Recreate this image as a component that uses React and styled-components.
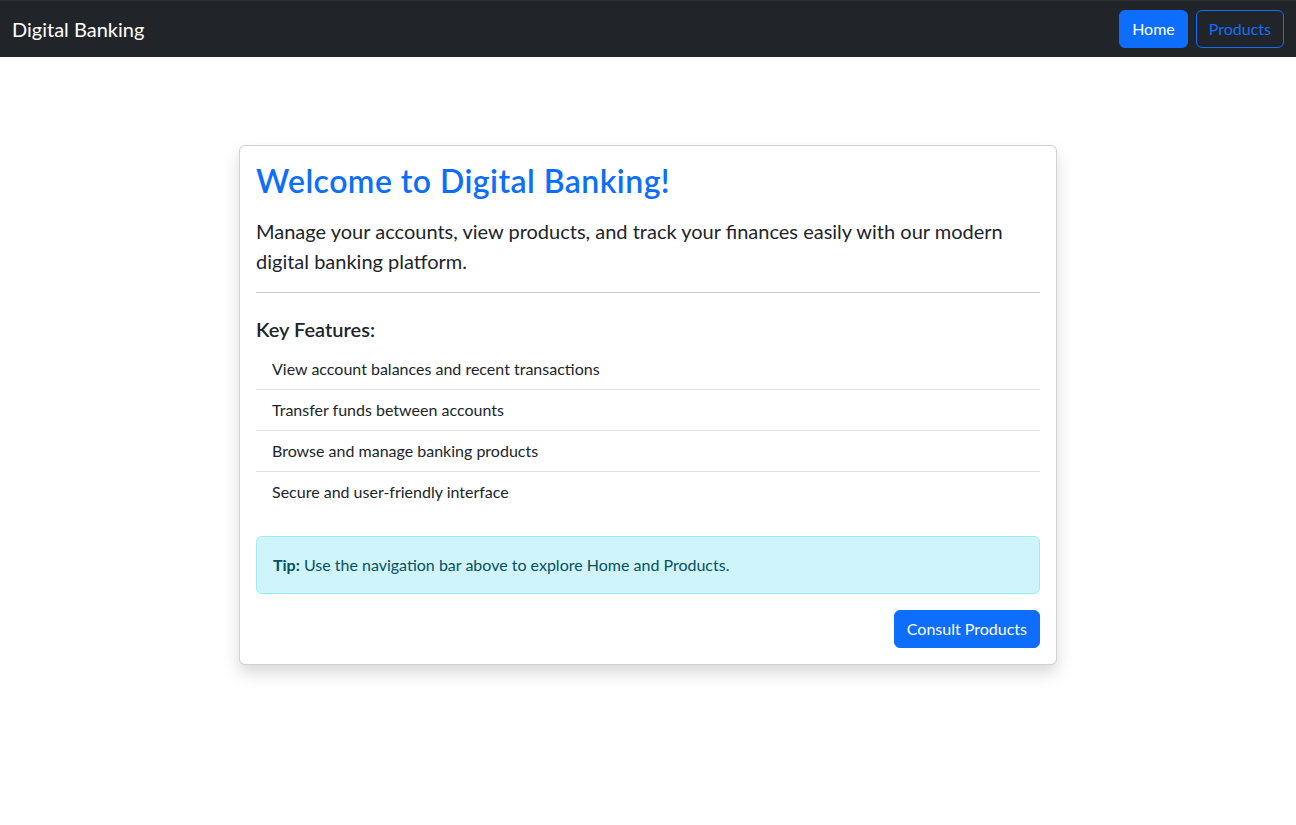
import React from "react";
import styled, { createGlobalStyle } from "styled-components";

const FONT = `"Lato", "Liberation Sans", sans-serif`;

const Global = createGlobalStyle`
  * { box-sizing: border-box; }
  html, body { min-height: 100%; }
  body {
    margin: 0;
    font-family: ${FONT};
    font-size: 16px;
    line-height: 1.5;
    color: #212529;
    background: #fff;
  }
`;

const Page = styled.div`
  min-height: 100vh;
  display: flex;
  flex-direction: column;
`;

const Navbar = styled.nav`
  height: 57px;
  flex-shrink: 0;
  background: #212529;
  border-top: 1px solid #2c3034;
  display: flex;
  align-items: center;
  justify-content: space-between;
  padding: 0 12px;
`;

const Brand = styled.a`
  color: #fff;
  font-size: 20px;
  line-height: 30px;
  text-decoration: none;
`;

const NavButtons = styled.div`
  display: flex;
  gap: 8px;
`;

const Button = styled.button`
  font-family: ${FONT};
  font-size: 16px;
  line-height: 24px;
  padding: 6px 12px;
  border-radius: 6px;
  border: 1px solid #0d6efd;
  background: ${(p) => (p.$outline ? "transparent" : "#0d6efd")};
  color: ${(p) => (p.$outline ? "#0d6efd" : "#fff")};
  cursor: pointer;
`;

const Main = styled.main`
  flex: 1;
  display: flex;
  justify-content: center;
  align-items: flex-start;
  padding: 88px 0 48px;
`;

const Card = styled.div`
  width: 818px;
  background: #fff;
  border: 1px solid rgba(0, 0, 0, 0.175);
  border-radius: 6px;
  box-shadow: 0 8px 16px rgba(0, 0, 0, 0.15);
  padding: 16px;
`;

const Title = styled.h2`
  margin: 0 0 16px;
  font-size: 32px;
  font-weight: 600;
  line-height: 1.2;
  letter-spacing: 0.45px;
  color: #0d6efd;
`;

const Lead = styled.p`
  margin: 0;
  font-size: 20px;
  line-height: 30px;
`;

const Rule = styled.hr`
  margin: 16px 0 24px;
  border: 0;
  border-top: 1px solid rgba(33, 37, 41, 0.25);
`;

const Subtitle = styled.h5`
  margin: 0 0 8px;
  font-size: 20px;
  font-weight: 600;
  line-height: 1.2;
`;

const List = styled.ul`
  list-style: none;
  margin: 0 0 24px;
  padding: 0;
`;

const Item = styled.li`
  padding: 8px 16px;
  line-height: 24px;
  border-bottom: 1px solid #dee2e6;
  &:last-child { border-bottom: 0; }
`;

const Alert = styled.div`
  background: #cff4fc;
  border: 1px solid #9eeaf9;
  color: #055160;
  border-radius: 6px;
  padding: 16px;
  margin-bottom: 16px;
`;

const Actions = styled.div`
  display: flex;
  justify-content: flex-end;
`;

const features = [
  "View account balances and recent transactions",
  "Transfer funds between accounts",
  "Browse and manage banking products",
  "Secure and user-friendly interface",
];

export default function App() {
  return (
    <Page>
      <Global />
      <Navbar>
        <Brand href="#">Digital Banking</Brand>
        <NavButtons>
          <Button>Home</Button>
          <Button $outline>Products</Button>
        </NavButtons>
      </Navbar>
      <Main>
        <Card>
          <Title>Welcome to Digital Banking!</Title>
          <Lead>
            Manage your accounts, view products, and track your finances easily with our modern digital banking platform.
          </Lead>
          <Rule />
          <Subtitle>Key Features:</Subtitle>
          <List>
            {features.map((f) => (
              <Item key={f}>{f}</Item>
            ))}
          </List>
          <Alert>
            <strong>Tip:</strong> Use the navigation bar above to explore Home and Products.
          </Alert>
          <Actions>
            <Button>Consult Products</Button>
          </Actions>
        </Card>
      </Main>
    </Page>
  );
}
